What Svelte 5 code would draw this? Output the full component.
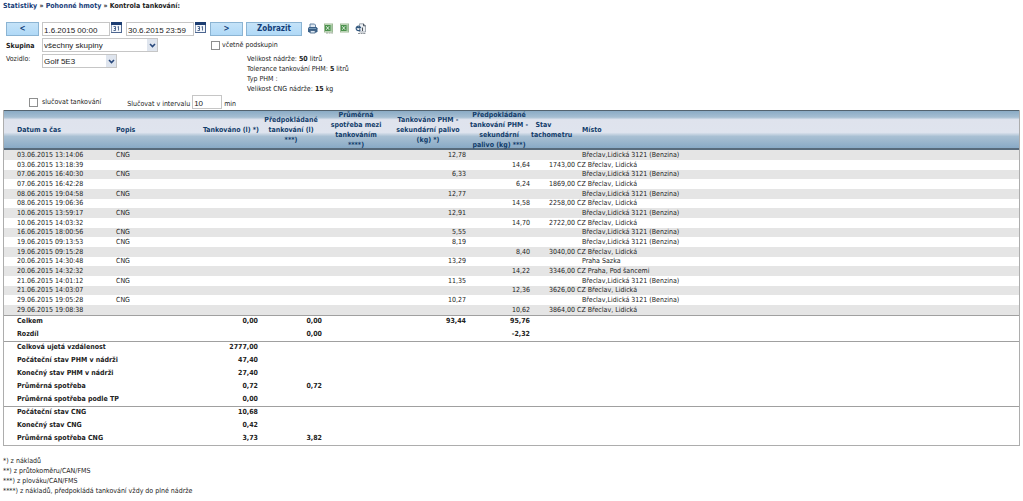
<script>
  let from = $state('1.6.2015 00:00');
  let to = $state('30.6.2015 23:59');
  let interval = $state('10');

  const benzina = 'Břeclav,Lidická 3121 (Benzina)';
  const lidicka = 'CZ Břeclav, Lidická';

  // A fuelling has a quantity; a sensor reading has an estimate and odometer.
  const rows = [
    { date: '03.06.2015 13:14:06', fuel: '12,78', place: benzina },
    { date: '03.06.2015 13:18:39', estimate: '14,64', km: '1743,00', place: lidicka },
    { date: '07.06.2015 16:40:30', fuel: '6,33', place: benzina },
    { date: '07.06.2015 16:42:28', estimate: '6,24', km: '1869,00', place: lidicka },
    { date: '08.06.2015 19:04:58', fuel: '12,77', place: benzina },
    { date: '08.06.2015 19:06:36', estimate: '14,58', km: '2258,00', place: lidicka },
    { date: '10.06.2015 13:59:17', fuel: '12,91', place: benzina },
    { date: '10.06.2015 14:03:32', estimate: '14,70', km: '2722,00', place: lidicka },
    { date: '16.06.2015 18:00:56', fuel: '5,55', place: benzina },
    { date: '19.06.2015 09:13:53', fuel: '8,19', place: benzina },
    { date: '19.06.2015 09:15:28', estimate: '8,40', km: '3040,00', place: lidicka },
    { date: '20.06.2015 14:30:48', fuel: '13,29', place: 'Praha Sazka' },
    { date: '20.06.2015 14:32:32', estimate: '14,22', km: '3346,00', place: 'CZ Praha, Pod šancemi' },
    { date: '21.06.2015 14:01:12', fuel: '11,35', place: benzina },
    { date: '21.06.2015 14:03:07', estimate: '12,36', km: '3626,00', place: lidicka },
    { date: '29.06.2015 19:05:28', fuel: '10,27', place: benzina },
    { date: '29.06.2015 19:08:38', estimate: '10,62', km: '3864,00', place: lidicka }
  ];

  const summaries = [
    [
      ['Celkem', '0,00', '0,00', '93,44', '95,76'],
      ['Rozdíl', '', '0,00', '', '-2,32']
    ],
    [
      ['Celková ujetá vzdálenost', '2777,00'],
      ['Počáteční stav PHM v nádrži', '47,40'],
      ['Konečný stav PHM v nádrži', '27,40'],
      ['Průměrná spotřeba', '0,72', '0,72'],
      ['Průměrná spotřeba podle TP', '0,00']
    ],
    [
      ['Počáteční stav CNG', '10,68'],
      ['Konečný stav CNG', '0,42'],
      ['Průměrná spotřeba CNG', '3,73', '3,82']
    ]
  ];
</script>

{#snippet calendar()}
  <svg width="11" height="12" viewBox="0 0 11 12" aria-hidden="true">
    <rect x=".5" y=".5" width="10" height="10" fill="#f4f7fb" stroke="#8b9db8" />
    <path d="M0 0h11v3H0z" fill="#1c3d72" />
    <path d="M10 3h1v8H0v-1h10z" fill="#4d6690" />
    <path d="M2.500 4.500h2v4h-2M3 6.500h1.500M6.500 5l1-.5v4" fill="none" stroke="#2b4778" stroke-width=".8" />
  </svg>
{/snippet}

{#snippet arrow()}
  <span class="arrow">
    <svg width="7" height="5" viewBox="0 0 7 5" aria-hidden="true">
      <path d="M1 1l2.500 2.500L6 1" fill="none" stroke="#28487c" stroke-width="1.600" />
    </svg>
  </span>
{/snippet}

{#snippet sheet(caption)}
  <svg width="11" height="11" viewBox="0 0 11 11" aria-hidden="true">
    <rect x="1.500" y="1" width="8" height="8" fill="#dcebd6" stroke="#9dbb96" />
    <path d="M6.500 3h2.500M6.500 5h2.500M6.500 7h2.500" stroke="#6fa570" />
    <rect x="2" y="2" width="5.500" height="6" fill="#4b924d" />
    <path d="M3.200 3.200l3 3.600M6.200 3.200l-3 3.600" stroke="#e9f5e8" stroke-width=".9" />
    {#if caption}
      <path d="M3 10h7" stroke="#9aa898" stroke-dasharray="2 .6" />
    {/if}
  </svg>
{/snippet}

<main>
  <nav><a href="#statistiky">Statistiky</a> » <a href="#phm">Pohonné hmoty</a> » Kontrola tankování:</nav>

  <form onsubmit={(e) => e.preventDefault()}>
    <div class="toolbar">
      <button type="button" class="step">&lt;</button>
      <div class="date">
        <input type="text" aria-label="Od" bind:value={from} />
        <button type="button" class="icon" aria-label="Kalendář od">{@render calendar()}</button>
      </div>
      <div class="date">
        <input type="text" aria-label="Do" bind:value={to} />
        <button type="button" class="icon" aria-label="Kalendář do">{@render calendar()}</button>
      </div>
      <button type="button" class="step">&gt;</button>
      <button type="submit" class="show">Zobrazit</button>
      <div class="exports">
        <button type="button" class="icon" aria-label="Tisk">
          <svg width="11" height="11" viewBox="0 0 11 11" aria-hidden="true">
            <path d="M3 1h4.500l1 1v3H3z" fill="#dfe8f1" stroke="#56779b" stroke-width=".9" />
            <path d="M2 4h7.500l1 1.200v3l-1 1.300H2L1 8.200v-3z" fill="#3b6087" />
            <path d="M2 5.500h7" stroke="#87a8c5" stroke-width=".8" />
            <path d="M3.200 7.500h5v2.500h-5z" fill="#dde8f2" stroke="#395a7e" stroke-width=".8" />
          </svg>
        </button>
        <button type="button" class="icon" aria-label="CSV">{@render sheet(true)}</button>
        <button type="button" class="icon" aria-label="Excel">{@render sheet(false)}</button>
        <button type="button" class="icon" aria-label="HTML">
          <svg width="12" height="12" viewBox="0 0 12 12" aria-hidden="true">
            <path d="M4.500 .8h4l2 2V9h-6z" fill="#eceff3" stroke="#8d96a0" stroke-width=".8" />
            <path d="M8.500 .8v2h2" fill="none" stroke="#46515d" />
            <path d="M5.400 6.600A2.300 2.300 0 1 1 5.600 4.600H1.600" fill="none" stroke="#34597f" stroke-width="1.200" />
            <path d="M7.500 4.500v3.500" stroke="#4a5058" />
            <path d="M3 10.500h8" stroke="#8d949b" stroke-dasharray="2 .6" />
          </svg>
        </button>
      </div>
    </div>

    <div class="filters">
      <label class="strong" for="group">Skupina</label>
      <div class="select wide">
        <select id="group"><option>všechny skupiny</option></select>
        {@render arrow()}
      </div>
      <label class="check"><input type="checkbox" />včetně podskupin</label>

      <label for="vehicle">Vozidlo:</label>
      <div class="select">
        <select id="vehicle"><option>Golf 5E3</option></select>
        {@render arrow()}
      </div>
      <div class="info">
        <div>Velikost nádrže: <b>50</b> litrů</div>
        <div>Tolerance tankování PHM: <b>5</b> litrů</div>
        <div>Typ PHM :</div>
        <div>Velikost CNG nádrže: <b>15</b> kg</div>
      </div>
    </div>

    <div class="merge">
      <label class="check"><input type="checkbox" />slučovat tankování</label>
      <label class="interval">Slučovat v intervalu <input type="text" bind:value={interval} /> min</label>
    </div>
  </form>

  <table>
    <colgroup>
      <col class="c-date" /><col class="c-desc" /><col class="c-fuel" /><col class="c-est" /><col class="c-avg" />
      <col class="c-fuel2" /><col class="c-est2" /><col class="c-km" /><col />
    </colgroup>
    <thead>
      <tr>
        <th class="first">Datum a čas</th>
        <th class="left">Popis</th>
        <th class="right">Tankováno (l) *)</th>
        <th>Předpokládané<br />tankování (l)<br />***)</th>
        <th>Průměrná<br />spotřeba mezi<br />tankováním<br />****)</th>
        <th>Tankováno PHM -<br />sekundární palivo<br />(kg) *)</th>
        <th>Předpokládané<br />tankování PHM -<br />sekundární<br />palivo (kg) ***)</th>
        <th class="km">&nbsp; Stav<br />tachometru</th>
        <th class="place indent">Místo</th>
      </tr>
    </thead>
    <tbody class="log">
      {#each rows as r}
        <tr>
          <td class="first">{r.date}</td>
          <td class="left">{r.fuel ? 'CNG' : ''}</td>
          <td></td>
          <td></td>
          <td></td>
          <td class="num">{r.fuel ?? ''}</td>
          <td class="num">{r.estimate ?? ''}</td>
          <td class="num km">{r.km ?? ''}</td>
          <td class="place" class:indent={r.fuel}>{r.place}</td>
        </tr>
      {/each}
    </tbody>
    {#each summaries as group}
      <tbody class="summary">
        {#each group as [label, a = '', b = '', c = '', d = '']}
          <tr>
            <th class="first" colspan="2" scope="row">{label}</th>
            <td class="num">{a}</td>
            <td class="num">{b}</td>
            <td></td>
            <td class="num">{c}</td>
            <td class="num">{d}</td>
            <td colspan="2"></td>
          </tr>
        {/each}
      </tbody>
    {/each}
  </table>

  <footer>
    <div>*) z nákladů</div>
    <div>**) z průtokoměru/CAN/FMS</div>
    <div>***) z plováku/CAN/FMS</div>
    <div>****) z nákladů, předpokládá tankování vždy do plné nádrže</div>
  </footer>
</main>

<style>
  :global(body) {
    background: #fff;
  }
  main {
    padding: 0 3px;
    color: #222;
    font: 7px/10px 'DejaVu Sans Condensed', 'DejaVu Sans', sans-serif;
  }
  nav {
    padding-top: 1px;
    font-weight: bold;
  }
  a {
    color: #163c78;
    text-decoration: none;
  }
  input,
  select,
  button {
    box-sizing: border-box;
    margin: 0;
    font: inherit;
    color: inherit;
  }
  form {
    padding: 11px 3px 1px;
  }
  .toolbar {
    display: flex;
    align-items: center;
    gap: 3px;
  }
  .step,
  .show {
    height: 14px;
    padding: 0;
    border: 1px solid #8bb4d3;
    background: linear-gradient(#c5e3f8, #b0d9f7);
    color: #123d78;
    font-weight: bold;
    font-size: 8px;
  }
  .step {
    width: 33px;
  }
  .show {
    width: 56px;
  }
  .date {
    display: flex;
    width: 81px;
    gap: 1px;
  }
  input[type='text'],
  select {
    height: 14px;
    border: 1px solid #c6c6c6;
    background: #fff;
    font-family: 'Liberation Sans', sans-serif;
    font-size: 8px;
  }
  input[type='text'] {
    padding: 2px 1px 0;
  }
  .date input {
    width: 68px;
  }
  .icon {
    display: flex;
    padding: 0;
    border: 0;
    background: none;
  }
  .exports {
    display: flex;
    gap: 5px;
    padding-left: 2px;
  }
  .filters {
    display: grid;
    grid-template-columns: 36px 169px 1fr;
    grid-template-rows: 14px 40px;
    row-gap: 2px;
    padding-top: 2px;
  }
  .strong {
    padding-top: 3px;
    font-weight: bold;
  }
  .select {
    position: relative;
    width: 75px;
    height: 14px;
  }
  .wide {
    width: 116px;
  }
  select {
    display: block;
    width: 100%;
    padding: 2px 12px 0 1px;
    border-radius: 0;
    appearance: none;
  }
  .arrow {
    position: absolute;
    top: 1px;
    right: 1px;
    bottom: 1px;
    width: 10px;
    display: grid;
    place-items: center;
    background: #dfe5ee;
    pointer-events: none;
  }
  .check {
    display: flex;
    align-items: center;
    gap: 2px;
  }
  input[type='checkbox'] {
    width: 9px;
    height: 9px;
    border: 1px solid #8e8f8f;
    background: #fff;
    appearance: none;
  }
  input[type='checkbox']:checked {
    background: #28487c;
  }
  .info {
    padding-left: 36px;
  }
  .merge {
    display: flex;
    align-items: center;
    gap: 26px;
    padding: 1px 0 0 23px;
  }
  .merge .check {
    gap: 4px;
  }
  .interval input {
    width: 30px;
  }
  table {
    width: 100%;
    table-layout: fixed;
    border-collapse: separate;
    border-spacing: 0;
    border: 1px solid #adadad;
    border-top: 0;
  }
  .c-date { width: 108px; }
  .c-desc { width: 75px; }
  .c-fuel { width: 72px; }
  .c-est { width: 64px; }
  .c-avg { width: 66px; }
  .c-fuel2 { width: 78px; }
  .c-est2 { width: 64px; }
  .c-km { width: 45px; }
  td,
  th {
    padding: 0;
    white-space: nowrap;
  }
  thead tr {
    background: linear-gradient(#86a8c3, #a5bed2 18%, #dfe3ed 24%, #dfe4ee 56%, #a9c0d3 66%, #83a6c4);
  }
  thead th {
    height: 40px;
    box-shadow: inset 0 1px #53636f, inset 0 -2px #586b7c;
    color: #123d6b;
    line-height: 10px;
  }
  th.first,
  td.first {
    padding-left: 13px;
    text-align: left;
  }
  .left,
  .km,
  .place {
    text-align: left;
  }
  .left {
    padding-left: 4px;
  }
  .right,
  .num,
  .num.km {
    text-align: right;
  }
  .num {
    padding-right: 1px;
  }
  .place {
    padding-left: 1px;
  }
  .place.indent {
    padding-left: 6px;
  }
  .log td {
    height: 10px;
    line-height: 9px;
  }
  .log tr:nth-child(3n) td {
    height: 9px;
  }
  .log tr:nth-child(odd) {
    background: #e5e5e5;
  }
  .summary {
    font-weight: bold;
  }
  .summary td,
  .summary th {
    height: 13px;
    line-height: 13px;
  }
  .summary tr:first-child > * {
    box-shadow: inset 0 1px #a0a0a0;
  }
  footer {
    padding-top: 10px;
  }
</style>
